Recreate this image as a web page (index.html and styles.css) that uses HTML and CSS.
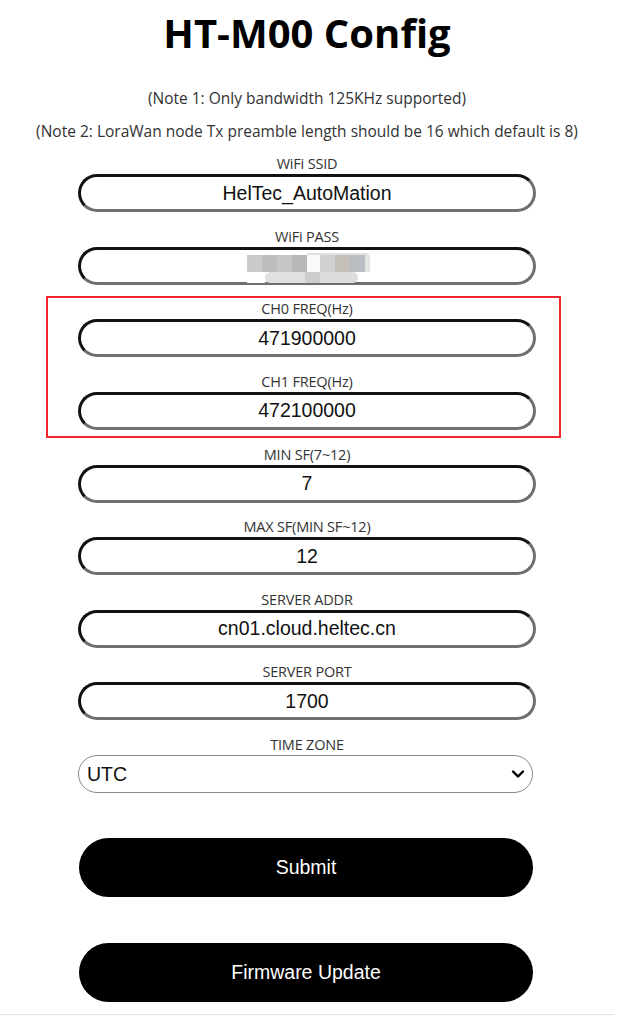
FILE: index.html
```html
<!DOCTYPE html>
<html lang="en">
<head>
<meta charset="utf-8">
<title>HT-M00 Config</title>
<link rel="stylesheet" href="styles.css">
</head>
<body>
<h1 class="title">HT-M00 Config</h1>
<p class="note note-1">(Note 1: Only bandwidth 125KHz supported)</p>
<p class="note note-2">(Note 2: LoraWan node Tx preamble length should be 16 which default is 8)</p>
<form class="form">
  <div class="group">
    <label class="label">WiFi SSID</label>
    <input class="field" type="text" value="HelTec_AutoMation">
  </div>
  <div class="group">
    <label class="label">WiFi PASS</label>
    <div class="field-wrap">
      <input class="field" type="text" value="">
      <div class="mosaic">
        <div class="mosaic-top"></div>
        <div class="mosaic-row">
          <span class="m m1"></span><span class="m m2"></span><span class="m m3"></span><span class="m m4"></span><span class="m m5"></span><span class="m m6"></span><span class="m m7"></span><span class="m m8"></span><span class="m m9"></span>
        </div>
        <div class="mosaic-row">
          <span class="l l0"></span><span class="l l1"></span><span class="l l2"></span><span class="l l3"></span>
        </div>
      </div>
    </div>
  </div>
  <div class="highlight">
    <div class="group">
      <label class="label">CH0 FREQ(Hz)</label>
      <input class="field" type="text" value="471900000">
    </div>
    <div class="group">
      <label class="label">CH1 FREQ(Hz)</label>
      <input class="field" type="text" value="472100000">
    </div>
  </div>
  <div class="group">
    <label class="label">MIN SF(7~12)</label>
    <input class="field" type="text" value="7">
  </div>
  <div class="group">
    <label class="label">MAX SF(MIN SF~12)</label>
    <input class="field" type="text" value="12">
  </div>
  <div class="group">
    <label class="label">SERVER ADDR</label>
    <input class="field" type="text" value="cn01.cloud.heltec.cn">
  </div>
  <div class="group">
    <label class="label">SERVER PORT</label>
    <input class="field" type="text" value="1700">
  </div>
  <div class="group">
    <label class="label">TIME ZONE</label>
    <div class="select-wrap">
      <select class="select">
        <option>UTC</option>
      </select>
      <svg class="chevron" width="14" height="10" viewBox="0 0 14 10"><path d="M2 2.5 L7 7.5 L12 2.5" fill="none" stroke="#000" stroke-width="2.4" stroke-linecap="round" stroke-linejoin="round"/></svg>
    </div>
  </div>
  <button class="btn btn-submit" type="button">Submit</button>
  <button class="btn btn-fw" type="button">Firmware Update</button>
</form>
<div class="bottom-line"></div>
</body>
</html>
```
FILE: styles.css
```css
* { box-sizing: border-box; }
html, body { margin: 0; padding: 0; background: #fff; }
body {
  width: 614px;
  font-family: "Open Sans", "Noto Sans", sans-serif;
  color: #222;
}
.title {
  margin: 0;
  padding-top: 9px;
  height: 76px;
  font-family: "Open Sans", sans-serif;
  font-weight: 700;
  font-size: 40px;
  line-height: 48px;
  text-align: center;
  color: #000;
}
.note {
  margin: 0;
  font-size: 15.5px;
  line-height: 20px;
  text-align: center;
  color: #333;
}
.note-1 { margin-top: 12px; }
.note-2 { margin-top: 13px; }
.form {
  width: 458px;
  margin: 13px 0 0 78px;
  display: flex;
  flex-direction: column;
  gap: 14.5px;
}
.group {
  display: flex;
  flex-direction: column;
}
.label {
  display: block;
  height: 20px;
  font-size: 14.5px;
  line-height: 20px;
  text-align: center;
  color: #333;
  letter-spacing: -0.2px;
}
.field {
  display: block;
  width: 458px;
  height: 38px;
  margin: 0;
  padding: 0 20px;
  border: 3px solid;
  border-color: #111 #6f6f6f #6f6f6f #111;
  border-radius: 19px;
  background: #fff;
  font-family: "Liberation Sans", Arial, sans-serif;
  font-size: 19.5px;
  color: #111;
  text-align: center;
  outline: none;
}
.field-wrap { position: relative; }
.mosaic {
  position: absolute;
  left: 169px;
  top: 6px;
  width: 125px;
}
.mosaic-top {
  margin-left: 60px;
  width: 62px;
  height: 2px;
  background: #e2e2e2;
  border-radius: 1px 2px 0 0;
}
.mosaic-row { display: flex; }
.m { display: block; width: 15px; height: 17px; }
.m1 { background: #cbcbcb; }
.m2 { background: #bdbdbd; }
.m3 { background: #c6c6c6; }
.m4 { background: #b6b9b7; }
.m5 { background: #f9f9f8; width: 13px; }
.m6 { background: #d0d0d0; }
.m7 { background: #c5bfb9; }
.m8 { background: #babdc1; }
.m9 { background: #e3e3e3; width: 5px; }
.l { display: block; height: 11px; }
.l0 { width: 18px; background: #fff; }
.l1 { width: 40px; background: #e0e0e0; border-radius: 6px 0 0 6px; }
.l2 { width: 15px; background: #cdcdcd; }
.l3 { width: 38px; background: #dcdcdc; border-radius: 0 6px 6px 0; }
.highlight {
  display: flex;
  flex-direction: column;
  gap: 14.5px;
  margin: -3.5px -25px -7.5px -32px;
  padding: 1.5px 23px 6px 30px;
  border: 2px solid #f0282d;
}
.select-wrap {
  position: relative;
  width: 455px;
}
.select {
  display: block;
  width: 455px;
  height: 38px;
  margin: 0;
  padding: 0 8px;
  border: 1px solid #8a8a8a;
  border-radius: 19px;
  background: #fff;
  appearance: none;
  -webkit-appearance: none;
  font-family: "Liberation Sans", Arial, sans-serif;
  font-size: 19.5px;
  color: #111;
  outline: none;
}
.chevron {
  position: absolute;
  right: 8px;
  top: 14px;
  pointer-events: none;
}
.btn {
  display: block;
  width: 454px;
  height: 59px;
  margin: 0 0 0 1px;
  border: none;
  border-radius: 30px;
  background: #000;
  color: #fff;
  font-family: "Liberation Sans", Arial, sans-serif;
  font-size: 19.5px;
}
.btn-submit { margin-top: 31px; }
.btn-fw { margin-top: 31px; }
.bottom-line {
  margin-top: 12px;
  width: 623px;
  height: 1px;
  background: #e3e3e3;
}
```
